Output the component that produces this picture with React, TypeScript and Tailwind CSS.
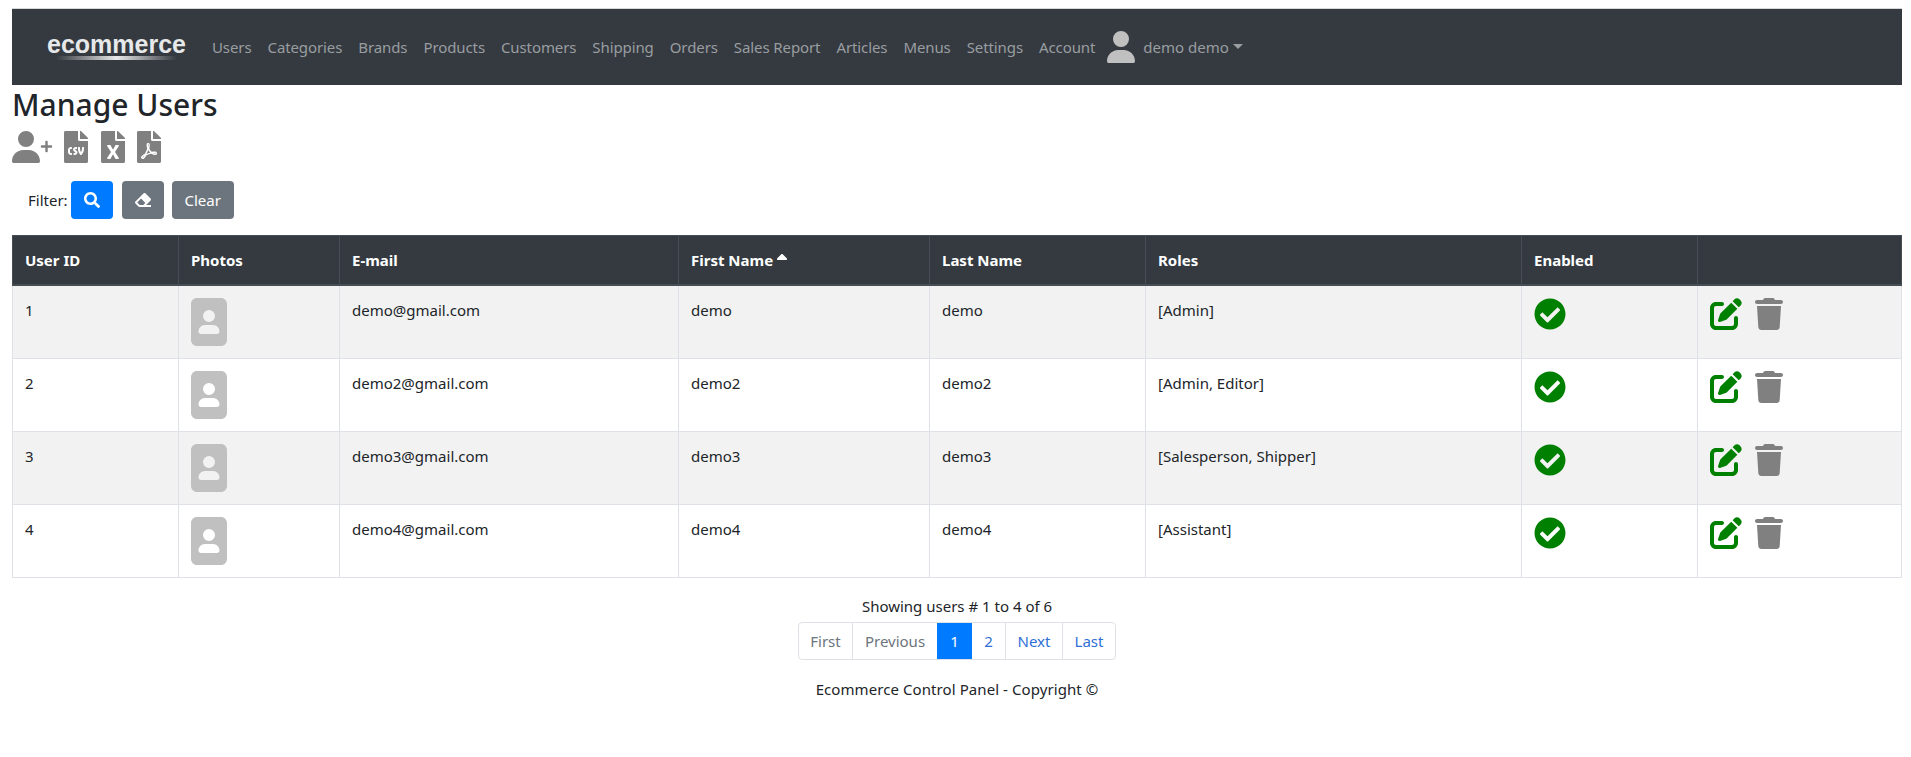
import React from 'react';
import { FaCheckCircle, FaEraser, FaFileCsv, FaFileExcel, FaFilePdf, FaPlus, FaSearch } from 'react-icons/fa';
import { FaImagePortrait, FaPenToSquare, FaSortUp, FaTrash, FaUser } from 'react-icons/fa6';

const navLinks = ['Users', 'Categories', 'Brands', 'Products', 'Customers', 'Shipping', 'Orders', 'Sales Report', 'Articles', 'Menus', 'Settings', 'Account'];

const users = [
  { id: 1, email: 'demo@gmail.com', first: 'demo', last: 'demo', roles: '[Admin]' },
  { id: 2, email: 'demo2@gmail.com', first: 'demo2', last: 'demo2', roles: '[Admin, Editor]' },
  { id: 3, email: 'demo3@gmail.com', first: 'demo3', last: 'demo3', roles: '[Salesperson, Shipper]' },
  { id: 4, email: 'demo4@gmail.com', first: 'demo4', last: 'demo4', roles: '[Assistant]' },
];

const pageLinkClass = 'flex h-[36px] items-center justify-center border-l border-[#dee2e6]';

const Navbar = () => (
  <nav className="flex h-[76px] items-center bg-[#343a40] pl-[35px]">
    <a className="relative mr-[25px] mb-[7px] w-[140px] text-[25px] leading-[30px] font-bold text-[#e6e8ea] [font-family:'Liberation_Sans',sans-serif]">
      ecommerce
      <span className="absolute top-[27px] left-[9px] h-[4px] w-[121px] rounded-full bg-gradient-to-r from-transparent via-[#e8e8e8] to-transparent" />
    </a>
    <ul className="flex items-center gap-[16px] tracking-[-0.1px] text-[#9a9da0]">
      {navLinks.map((link) => (
        <li key={link}>{link}</li>
      ))}
    </ul>
    <FaUser className="ml-[10px] text-[#c0c0c0]" size={32} />
    <span className="ml-[6px] flex items-center text-[#9a9da0]">
      demo demo
      <span className="mt-[-2px] ml-[4px] border-x-[5px] border-t-[5px] border-x-transparent border-t-[#9a9da0]" />
    </span>
  </nav>
);

const UsersTable = () => (
  <table className="w-full table-fixed border-collapse">
    <thead>
      <tr className="h-[49px] bg-[#343a40] text-left text-white">
        <th className="w-[166px] border border-[#454d55] border-b-2 px-3 font-bold">User ID</th>
        <th className="w-[161px] border border-[#454d55] border-b-2 px-3 font-bold">Photos</th>
        <th className="w-[339px] border border-[#454d55] border-b-2 px-3 font-bold">E-mail</th>
        <th className="w-[251px] border border-[#454d55] border-b-2 px-3 font-bold">
          First Name<FaSortUp className="ml-[1px] inline align-[-3px]" size={16} />
        </th>
        <th className="w-[216px] border border-[#454d55] border-b-2 px-3 font-bold">Last Name</th>
        <th className="w-[376px] border border-[#454d55] border-b-2 px-3 font-bold">Roles</th>
        <th className="w-[176px] border border-[#454d55] border-b-2 px-3 font-bold">Enabled</th>
        <th className="border border-[#454d55] border-b-2 px-3" />
      </tr>
    </thead>
    <tbody>
      {users.map((user) => (
        <tr key={user.id} className="odd:bg-[#f2f2f2]">
          <td className="h-[73px] border border-[#dee2e6] p-3 align-top">{user.id}</td>
          <td className="border border-[#dee2e6] p-3 align-top">
            <FaImagePortrait className="w-[36px] text-[#c0c0c0]" size={48} />
          </td>
          <td className="border border-[#dee2e6] p-3 align-top">{user.email}</td>
          <td className="border border-[#dee2e6] p-3 align-top">{user.first}</td>
          <td className="border border-[#dee2e6] p-3 align-top">{user.last}</td>
          <td className="border border-[#dee2e6] p-3 align-top">{user.roles}</td>
          <td className="border border-[#dee2e6] p-3 align-top">
            <FaCheckCircle className="text-[#008000]" size={32} />
          </td>
          <td className="border border-[#dee2e6] p-3 align-top">
            <div className="flex gap-[11px]">
              <FaPenToSquare className="text-[#008000]" size={32} />
              <FaTrash className="text-[#808080]" size={32} />
            </div>
          </td>
        </tr>
      ))}
    </tbody>
  </table>
);

const Pagination = () => (
  <div className="mt-[4px] flex h-[38px] overflow-hidden rounded border border-[#dee2e6] bg-white">
    <span className="flex w-[53px] items-center justify-center text-[#6c757d]">First</span>
    <span className={`${pageLinkClass} w-[85px] text-[#6c757d]`}>Previous</span>
    <span className="flex w-[35px] items-center justify-center bg-[#007bff] text-white">1</span>
    <span className="flex w-[33px] items-center justify-center text-[#2f6fd6]">2</span>
    <span className={`${pageLinkClass} w-[57px] text-[#2f6fd6]`}>Next</span>
    <span className={`${pageLinkClass} w-[53px] text-[#2f6fd6]`}>Last</span>
  </div>
);

export default function App() {
  return (
    <div className="min-h-[757px] bg-white pt-[8px] pr-[9px] pl-3 text-[15px] leading-6 text-[#212529] [font-family:'Noto_Sans',sans-serif]">
      <div className="h-px bg-[#d8d8d8]" />
      <Navbar />
      <h2 className="mt-[1px] text-[30px] leading-[38px] font-medium">Manage Users</h2>
      <div className="mt-[7px] flex items-center text-[#808080]">
        <div className="flex w-[40px] items-start">
          <FaUser className="w-[28px] shrink-0" size={32} />
          <FaPlus className="mt-[9px] shrink-0" size={13} />
        </div>
        <FaFileCsv className="ml-[12px] w-[24px]" size={32} />
        <FaFileExcel className="ml-[13px] w-[24px]" size={32} />
        <FaFilePdf className="ml-[12px] w-[24px]" size={32} />
      </div>
      <div className="mt-[18px] flex items-center pl-[16px]">
        <span className="mr-[3px]">Filter:</span>
        <button className="flex h-[38px] w-[42px] items-center justify-center rounded bg-[#007bff] text-white">
          <FaSearch size={16} />
        </button>
        <button className="ml-[9px] flex h-[38px] w-[42px] items-center justify-center rounded bg-[#6c757d] text-white">
          <FaEraser size={16} />
        </button>
        <button className="ml-[8px] flex h-[38px] w-[62px] items-center justify-center rounded bg-[#6c757d] text-white">Clear</button>
      </div>
      <div className="mt-[16px]">
        <UsersTable />
      </div>
      <div className="mt-[16px] flex flex-col items-center">
        <span>Showing users # 1 to 4 of 6</span>
        <Pagination />
        <p className="mt-[17px] tracking-[0.08px]">Ecommerce Control Panel - Copyright ©</p>
      </div>
    </div>
  );
}
